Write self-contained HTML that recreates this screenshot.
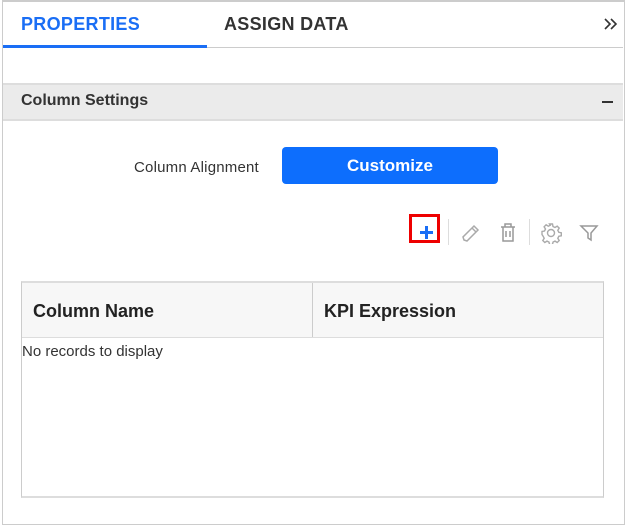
<!DOCTYPE html>
<html><head><style>
body{margin:0;width:627px;height:525px;background:#fff;position:relative;overflow:hidden;font-family:"Liberation Sans",sans-serif;}
.a{position:absolute;}
</style></head><body>
<div class="a" style="left:2px;top:0;width:621px;height:522px;border:1px solid #ccc;border-top:2px solid #ccc;"></div>
<div class="a" style="left:3px;top:47px;width:620px;height:1px;background:#ccc"></div>
<div class="a" style="left:3px;top:45px;width:204px;height:3px;background:#1a6ef5"></div>
<div class="a" style="left:21px;top:14px;font-size:18px;font-weight:bold;color:#1a6ef5;letter-spacing:0.3px">PROPERTIES</div>
<div class="a" style="left:224px;top:14px;font-size:18px;font-weight:bold;color:#333;letter-spacing:0.3px">ASSIGN DATA</div>
<svg class="a" style="left:603px;top:17px" width="16" height="14" viewBox="0 0 16 14" fill="none" stroke="#333" stroke-width="1.6"><path d="M2 2 L7 7 L2 12 M8 2 L13 7 L8 12"/></svg>
<div class="a" style="left:3px;top:83px;width:620px;height:34px;background:#ebebeb;border-top:2px solid #ddd;border-bottom:2px solid #ddd"></div>
<div class="a" style="left:21px;top:92px;font-size:16px;font-weight:bold;color:#333">Column Settings</div>
<div class="a" style="left:602px;top:101px;width:11px;height:2px;background:#333"></div>
<div class="a" style="left:134px;top:159px;font-size:15px;color:#333;letter-spacing:0.2px">Column Alignment</div>
<div class="a" style="left:282px;top:147px;width:216px;height:37px;background:#0d6efd;border-radius:4px;color:#fff;font-weight:bold;font-size:17px;text-align:center;line-height:37px">Customize</div>
<div class="a" style="left:409px;top:214px;width:31px;height:29px;border:3px solid #e00;box-sizing:border-box"></div>
<div class="a" style="left:420px;top:231px;width:13px;height:3px;background:#1a6ef5"></div>
<div class="a" style="left:425px;top:226px;width:3px;height:13px;background:#1a6ef5"></div>
<div class="a" style="left:448px;top:219px;width:1px;height:26px;background:#ddd"></div>
<div class="a" style="left:529px;top:219px;width:1px;height:26px;background:#ddd"></div>
<svg class="a" style="left:460px;top:222px" width="22" height="22" viewBox="0 0 22 22" fill="none" stroke="#aaa" stroke-width="1.5"><path d="M4 18 L3 15 L14 4 L18 8 L7 19 Z M12 6 L16 10"/></svg>
<svg class="a" style="left:498px;top:222px" width="20" height="22" viewBox="0 0 20 22" fill="none" stroke="#999" stroke-width="1.5"><path d="M3 5 H17 M7 5 V2 H13 V5 M5 5 V19 H15 V5 M8 9 V15 M12 9 V15"/></svg>
<svg class="a" style="left:540px;top:222px" width="22" height="22" viewBox="0 0 22 22" fill="none" stroke="#aaa" stroke-width="1.4"><circle cx="11" cy="11" r="3.5"/><path d="M9.5 2h3l.5 2.5 2 1 2.2-1.4 2 2-1.4 2.2 1 2 2.5.5v3l-2.5.5-1 2 1.4 2.2-2 2-2.2-1.4-2 1-.5 2.5h-3l-.5-2.5-2-1-2.2 1.4-2-2 1.4-2.2-1-2L2 12.5v-3l2.5-.5 1-2-1.4-2.2 2-2 2.2 1.4 2-1z"/></svg>
<svg class="a" style="left:579px;top:223px" width="20" height="20" viewBox="0 0 20 20" fill="none" stroke="#999" stroke-width="1.5"><path d="M2 3 H18 L12 10 V17 L9 15 V10 Z"/></svg>
<div class="a" style="left:21px;top:281px;width:581px;height:213px;border:1px solid #ccc;border-top:2px solid #ddd;border-bottom:2px solid #ddd"></div>
<div class="a" style="left:22px;top:283px;width:581px;height:54px;background:#f7f7f7;border-bottom:1px solid #ddd"></div>
<div class="a" style="left:312px;top:283px;width:1px;height:54px;background:#ccc"></div>
<div class="a" style="left:33px;top:301px;font-size:18px;font-weight:bold;color:#222">Column Name</div>
<div class="a" style="left:324px;top:301px;font-size:18px;font-weight:bold;color:#222">KPI Expression</div>
<div class="a" style="left:22px;top:343px;font-size:15px;color:#333">No records to display</div>
</body></html>
